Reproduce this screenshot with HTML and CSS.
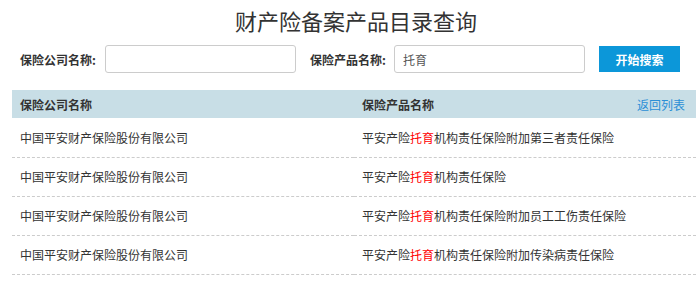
FILE: index.html
```html
<!DOCTYPE html>
<html lang="zh-CN">
<head>
<meta charset="utf-8">
<title>财产险备案产品目录查询</title>
<link rel="stylesheet" href="styles.css">
</head>
<body>
<div class="page">
  <h1 class="title">财产险备案产品目录查询</h1>
  <form class="search">
    <label class="lbl">保险公司名称:</label>
    <input class="field" type="text" value="">
    <label class="lbl lbl-2">保险产品名称:</label>
    <input class="field" type="text" value="托育">
    <button class="btn" type="button">开始搜索</button>
  </form>
  <table class="list">
    <thead>
      <tr>
        <th class="col">保险公司名称</th>
        <th class="col"><div class="th-flex"><span>保险产品名称</span><a class="back" href="#">返回列表</a></div></th>
      </tr>
    </thead>
    <tbody>
      <tr><td>中国平安财产保险股份有限公司</td><td>平安产险<span class="hl">托育</span>机构责任保险附加第三者责任保险</td></tr>
      <tr><td>中国平安财产保险股份有限公司</td><td>平安产险<span class="hl">托育</span>机构责任保险</td></tr>
      <tr><td>中国平安财产保险股份有限公司</td><td>平安产险<span class="hl">托育</span>机构责任保险附加员工工伤责任保险</td></tr>
      <tr><td>中国平安财产保险股份有限公司</td><td>平安产险<span class="hl">托育</span>机构责任保险附加传染病责任保险</td></tr>
    </tbody>
  </table>
</div>
</body>
</html>
```

FILE: styles.css
```css
* { box-sizing: border-box; }
html, body {
  margin: 0;
  padding: 0;
  background: #fff;
  font-family: "Noto Sans CJK SC", "Liberation Sans", sans-serif;
  color: #333;
}
.page {
  width: 684px;
  margin-left: 12px;
}
.title {
  margin: 0;
  padding-top: 5px;
  height: 40px;
  text-align: center;
  font-size: 22px;
  line-height: 30px;
  font-weight: 400;
  color: #333;
  padding-left: 4px;
}
.search {
  display: flex;
  align-items: center;
  height: 28px;
  margin-top: 5px;
  padding-left: 8px;
}
.lbl {
  flex: none;
  width: 85px;
  font-size: 12px;
  font-weight: 700;
  color: #333;
  white-space: nowrap;
}
.lbl-2 { margin-left: 14px; width: 84px; }
.field {
  flex: none;
  width: 191px;
  height: 28px;
  border: 1px solid #ccc;
  border-radius: 3px;
  padding: 0 8px;
  font-family: inherit;
  font-size: 12px;
  color: #555;
  outline: none;
}
.btn {
  flex: none;
  margin-left: 14px;
  width: 81px;
  height: 26px;
  border: none;
  background: #0c97d9;
  color: #fff;
  font-family: inherit;
  font-size: 12px;
  font-weight: 700;
  padding: 0;
}
.list {
  width: 684px;
  margin-top: 17px;
  border-collapse: collapse;
  table-layout: fixed;
}
.list th {
  background: #c8dee6;
  height: 28px;
  padding: 0 11px 0 8px;
  text-align: left;
  font-size: 12px;
  font-weight: 700;
  color: #333;
}
.th-flex {
  display: flex;
  justify-content: space-between;
  align-items: center;
}
.back {
  color: #2b8fd6;
  font-weight: 400;
  text-decoration: none;
}
.list td {
  height: 39px;
  padding: 0 8px;
  font-size: 12px;
  color: #333;
  border-bottom: 1px dashed #ccc;
  vertical-align: middle;
}
.hl { color: #ff0000; }
```
